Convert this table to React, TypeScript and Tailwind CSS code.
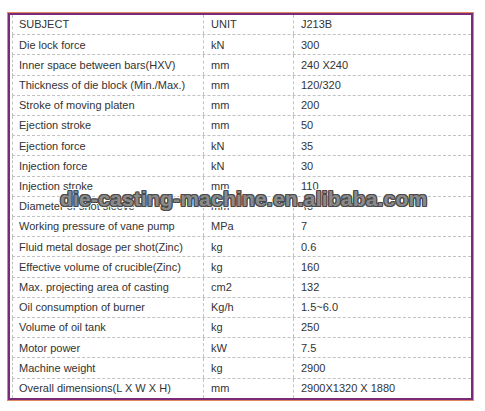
const rows: [string, string, string][] = [
  ["SUBJECT", "UNIT", "J213B"],
  ["Die lock force", "kN", "300"],
  ["Inner space between bars(HXV)", "mm", "240 X240"],
  ["Thickness of die block (Min./Max.)", "mm", "120/320"],
  ["Stroke of moving platen", "mm", "200"],
  ["Ejection stroke", "mm", "50"],
  ["Ejection force", "kN", "35"],
  ["Injection force", "kN", "30"],
  ["Injection stroke", "mm", "110"],
  ["Diameter of shot sleeve", "mm", "45"],
  ["Working pressure of vane pump", "MPa", "7"],
  ["Fluid metal dosage per shot(Zinc)", "kg", "0.6"],
  ["Effective volume of crucible(Zinc)", "kg", "160"],
  ["Max. projecting area of casting", "cm2", "132"],
  ["Oil consumption of burner", "Kg/h", "1.5~6.0"],
  ["Volume of oil tank", "kg", "250"],
  ["Motor power", "kW", "7.5"],
  ["Machine weight", "kg", "2900"],
  ["Overall dimensions(L X W X H)", "mm", "2900X1320 X 1880"],
];

export default function App() {
  return (
    <div className="relative h-[411px] w-[485px] bg-white pl-[7px] pt-[12px] font-['Liberation_Sans',Arial,sans-serif] text-[11px] text-[#333]">
      <div className="h-[389px] w-[467px] border border-[#e3895f]">
        <div className="flex h-full flex-col border-2 border-[#7a2a78] pl-[2px]">
          {rows.map(([subject, unit, value], i) => (
            <div
              key={subject}
              className={`flex flex-1 items-center border-l border-dashed border-l-[#c2c2c2] ${
                i < rows.length - 1 ? "border-b border-b-[#c2c2c2]" : ""
              }`}
            >
              <div className="flex h-full w-[191px] items-center border-r border-dashed border-[#c2c2c2] pl-[6px]">
                {subject}
              </div>
              <div className="flex h-full w-[90px] items-center border-r border-dashed border-[#c2c2c2] pl-[7px]">
                {unit}
              </div>
              <div className="flex h-full flex-1 items-center pl-[7px]">{value}</div>
            </div>
          ))}
        </div>
      </div>

      {/* watermark over the table */}
      <div className="pointer-events-none absolute left-[60px] top-[183px] font-['Liberation_Sans',Arial,sans-serif] text-[21px] font-bold tracking-[0.2px] text-[#8a8a8a] [paint-order:stroke_fill] [-webkit-text-stroke:4px_#fff] [text-shadow:1px_0_0_#4a4a4a,-1px_0_0_#4a4a4a,0_1px_0_#4a4a4a,0_-1px_0_#4a4a4a,1px_1px_0_#4a4a4a,-1px_-1px_0_#4a4a4a,1px_-1px_0_#4a4a4a,-1px_1px_0_#4a4a4a]">
        die-casting-machine.en.alibaba.com
      </div>
    </div>
  );
}
